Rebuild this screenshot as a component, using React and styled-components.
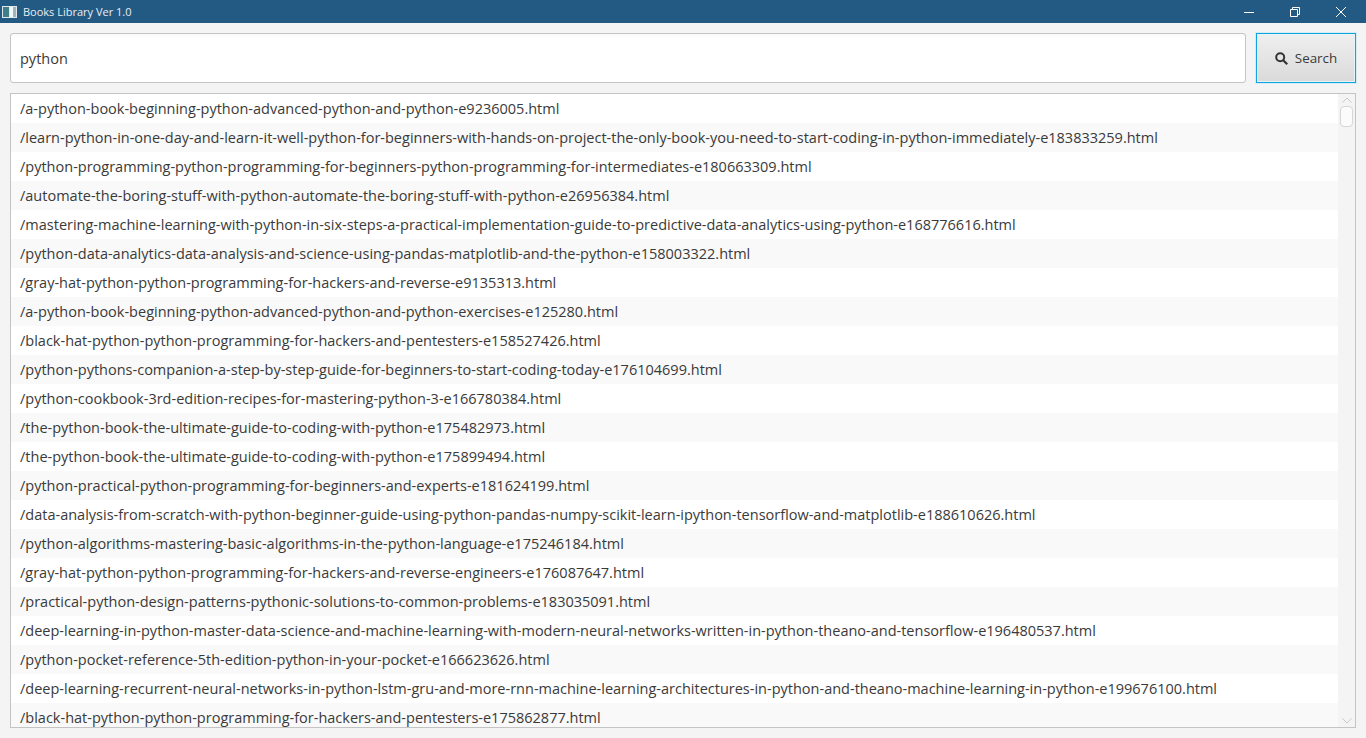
import React from 'react';
import styled, { createGlobalStyle } from 'styled-components';

const books = [
  '/a-python-book-beginning-python-advanced-python-and-python-e9236005.html',
  '/learn-python-in-one-day-and-learn-it-well-python-for-beginners-with-hands-on-project-the-only-book-you-need-to-start-coding-in-python-immediately-e183833259.html',
  '/python-programming-python-programming-for-beginners-python-programming-for-intermediates-e180663309.html',
  '/automate-the-boring-stuff-with-python-automate-the-boring-stuff-with-python-e26956384.html',
  '/mastering-machine-learning-with-python-in-six-steps-a-practical-implementation-guide-to-predictive-data-analytics-using-python-e168776616.html',
  '/python-data-analytics-data-analysis-and-science-using-pandas-matplotlib-and-the-python-e158003322.html',
  '/gray-hat-python-python-programming-for-hackers-and-reverse-e9135313.html',
  '/a-python-book-beginning-python-advanced-python-and-python-exercises-e125280.html',
  '/black-hat-python-python-programming-for-hackers-and-pentesters-e158527426.html',
  '/python-pythons-companion-a-step-by-step-guide-for-beginners-to-start-coding-today-e176104699.html',
  '/python-cookbook-3rd-edition-recipes-for-mastering-python-3-e166780384.html',
  '/the-python-book-the-ultimate-guide-to-coding-with-python-e175482973.html',
  '/the-python-book-the-ultimate-guide-to-coding-with-python-e175899494.html',
  '/python-practical-python-programming-for-beginners-and-experts-e181624199.html',
  '/data-analysis-from-scratch-with-python-beginner-guide-using-python-pandas-numpy-scikit-learn-ipython-tensorflow-and-matplotlib-e188610626.html',
  '/python-algorithms-mastering-basic-algorithms-in-the-python-language-e175246184.html',
  '/gray-hat-python-python-programming-for-hackers-and-reverse-engineers-e176087647.html',
  '/practical-python-design-patterns-pythonic-solutions-to-common-problems-e183035091.html',
  '/deep-learning-in-python-master-data-science-and-machine-learning-with-modern-neural-networks-written-in-python-theano-and-tensorflow-e196480537.html',
  '/python-pocket-reference-5th-edition-python-in-your-pocket-e166623626.html',
  '/deep-learning-recurrent-neural-networks-in-python-lstm-gru-and-more-rnn-machine-learning-architectures-in-python-and-theano-machine-learning-in-python-e199676100.html',
  '/black-hat-python-python-programming-for-hackers-and-pentesters-e175862877.html',
];

const GlobalStyle = createGlobalStyle`
  html, body {
    margin: 0;
    height: 100%;
    overflow: hidden;
    background: #f4f4f4;
    font-family: "Open Sans", "Noto Sans", sans-serif;
  }
`;

const Window = styled.div`
  display: flex;
  flex-direction: column;
  height: 738px;
`;

const TitleBar = styled.div`
  display: flex;
  align-items: center;
  height: 23px;
  padding-right: 2px;
  background: #225a84;
  color: #e8eef3;
  font-size: 11px;
  flex-shrink: 0;
`;

const AppIcon = styled.svg`
  width: 15px;
  height: 12px;
  margin: 0 6px 0 2px;
`;

const WindowTitle = styled.span`
  flex: 1;
`;

const WindowButton = styled.div`
  display: flex;
  align-items: center;
  justify-content: center;
  width: 46px;
  height: 23px;
  svg { display: block; }
`;

const Content = styled.div`
  display: flex;
  flex-direction: column;
  flex: 1;
  gap: 10px;
  padding: 10px;
  min-height: 0;
`;

const SearchRow = styled.div`
  display: flex;
  gap: 10px;
  height: 50px;
`;

const SearchInput = styled.div`
  flex: 1;
  display: flex;
  align-items: center;
  padding: 0 9px;
  background: linear-gradient(#fafafa, #ffffff 6px);
  border: 1px solid #c4c4c4;
  border-radius: 3px;
  font-size: 14.5px;
  color: #3a3a3a;
`;

const SearchButton = styled.div`
  width: 100px;
  box-sizing: border-box;
  display: flex;
  align-items: center;
  justify-content: center;
  gap: 7px;
  border: 1px solid #0ea5dc;
  box-shadow: inset 0 0 0 1px #e8f3f8, 0 0 0 1px #d4ecf6;
  background: linear-gradient(#efefef, #dadada);
  font-size: 13.4px;
  color: #3a3a3a;
`;

const ListBox = styled.div`
  flex: 1;
  display: flex;
  min-height: 0;
  border: 1px solid #c4c4c4;
  background: #fff;
`;

const Rows = styled.div`
  flex: 1;
  overflow: hidden;
`;

const Row = styled.div`
  height: 29px;
  line-height: 29px;
  padding-left: 9px;
  font-size: 14.5px;
  color: #3a3a3a;
  white-space: nowrap;
  background: ${(props) => (props.$odd ? '#f9f9f9' : '#ffffff')};
`;

const ScrollBar = styled.div`
  width: 17px;
  display: flex;
  flex-direction: column;
  align-items: center;
  background: #f4f4f4;
`;

const ScrollArrow = styled.svg`
  width: 10px;
  height: 6px;
  margin: 3px 0;
  flex-shrink: 0;
`;

const ScrollThumb = styled.div`
  width: 13px;
  height: 21px;
  box-sizing: border-box;
  margin-bottom: auto;
  background: #fbfbfb;
  border: 1px solid #d6d6d6;
  border-radius: 4px;
`;

export default function App() {
  return (
    <Window>
      <GlobalStyle />
      <TitleBar>
        <AppIcon viewBox="0 0 15 12">
          <rect x="0" y="0" width="15" height="12" fill="#dfe7ea" />
          <rect x="1" y="1" width="6" height="10" fill="#3f7f8c" />
          <rect x="8" y="1" width="3" height="10" fill="#f4f6f6" />
          <rect x="11" y="1" width="3" height="10" fill="#9fb4bb" />
        </AppIcon>
        <WindowTitle>Books Library Ver 1.0</WindowTitle>
        <WindowButton>
          <svg width="10" height="10" viewBox="0 0 10 10">
            <path d="M0 5.5h10" stroke="#fff" fill="none" />
          </svg>
        </WindowButton>
        <WindowButton>
          <svg width="10" height="10" viewBox="0 0 10 10">
            <path d="M0.5 2.5h7v7h-7zM2.5 2.5v-2h7v7h-2" stroke="#fff" fill="none" />
          </svg>
        </WindowButton>
        <WindowButton>
          <svg width="10" height="10" viewBox="0 0 10 10">
            <path d="M0 0l10 10M10 0L0 10" stroke="#fff" fill="none" />
          </svg>
        </WindowButton>
      </TitleBar>
      <Content>
        <SearchRow>
          <SearchInput>python</SearchInput>
          <SearchButton>
            <svg width="13" height="13" viewBox="0 0 13 13">
              <circle cx="5.2" cy="5.2" r="4" fill="none" stroke="#333" strokeWidth="2" />
              <path d="M8.2 8.2l4 4" stroke="#333" strokeWidth="2.2" />
            </svg>
            Search
          </SearchButton>
        </SearchRow>
        <ListBox>
          <Rows>
            {books.map((book, i) => (
              <Row key={i} $odd={i % 2 === 1}>{book}</Row>
            ))}
          </Rows>
          <ScrollBar>
            <ScrollArrow viewBox="0 0 10 6">
              <path d="M0.5 5.5L5 1l4.5 4.5" fill="none" stroke="#c8c8c8" />
            </ScrollArrow>
            <ScrollThumb />
            <ScrollArrow viewBox="0 0 10 6">
              <path d="M0.5 0.5L5 5l4.5-4.5" fill="none" stroke="#c8c8c8" />
            </ScrollArrow>
          </ScrollBar>
        </ListBox>
      </Content>
    </Window>
  );
}
